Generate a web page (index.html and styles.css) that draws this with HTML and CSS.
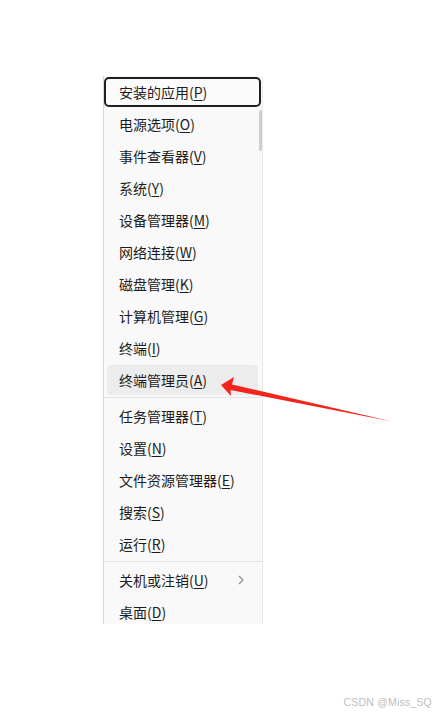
FILE: index.html
```html
<!DOCTYPE html>
<html lang="zh-CN">
<head>
  <meta charset="UTF-8">
  <meta name="viewport" content="width=device-width, initial-scale=1.0">
  <title>Win + X 菜单</title>
  <link rel="stylesheet" href="styles.css">
</head>
<body>
  <div class="page">
    <div class="menu">
      <div class="scroll-thumb"></div>
      <ul class="items">
        <li class="item focused">安装的应用(<u>P</u>)</li>
        <li class="item">电源选项(<u>O</u>)</li>
        <li class="item">事件查看器(<u>V</u>)</li>
        <li class="item">系统(<u>Y</u>)</li>
        <li class="item">设备管理器(<u>M</u>)</li>
        <li class="item">网络连接(<u>W</u>)</li>
        <li class="item">磁盘管理(<u>K</u>)</li>
        <li class="item">计算机管理(<u>G</u>)</li>
        <li class="item">终端(<u>I</u>)</li>
        <li class="item hover">终端管理员(<u>A</u>)</li>
        <li class="sep"></li>
        <li class="item">任务管理器(<u>T</u>)</li>
        <li class="item">设置(<u>N</u>)</li>
        <li class="item">文件资源管理器(<u>E</u>)</li>
        <li class="item">搜索(<u>S</u>)</li>
        <li class="item">运行(<u>R</u>)</li>
        <li class="sep"></li>
        <li class="item has-sub">关机或注销(<u>U</u>)
          <svg class="chev" width="6" height="10" viewBox="0 0 6 10"><polyline points="1,1 5,5 1,9" fill="none" stroke="#8a8a8a" stroke-width="1.1"/></svg>
        </li>
        <li class="item">桌面(<u>D</u>)</li>
      </ul>
    </div>

    <!-- red annotation arrow -->
    <svg class="arrow" width="435" height="724" viewBox="0 0 435 724">
      <polygon points="221,385 234,377 232,384.5 392,421.5 230.5,390 231,396" fill="#f4231c"/>
    </svg>

    <div class="mark">CSDN @Miss_SQ</div>
  </div>
</body>
</html>
```

FILE: styles.css
```css
html, body { margin: 0; padding: 0; background: #fff; }
.page { position: relative; width: 435px; height: 724px; overflow: hidden; }

.menu { position: relative; margin: 76px 0 0 103px; width: 158px; height: 548px; overflow: hidden; background: #f9f9f9; border-left: 1px solid #d6d6d6; border-right: 1px solid #e8e8e8; }
.scroll-thumb { position: absolute; right: 0; top: 34px; width: 3px; height: 41px; background: #cfcfcf; border-radius: 2px; }

.items { list-style: none; margin: 0; padding: 0; display: flex; flex-direction: column; }
.item { position: relative; height: 30px; margin: 1px 4px 1px 3px; padding-left: 12px; display: flex; align-items: center; border-radius: 4px; font-family: "Noto Sans CJK SC", "Noto Sans", sans-serif; font-size: 14px; color: #1c1c1c; white-space: nowrap; }
.item u { text-decoration-thickness: 1px; text-underline-offset: 2px; }
.item.focused { margin: 1px 1px 1px 0; padding-left: 13px; border: 2px solid #1f1f1f; height: 26px; border-radius: 5px; background: #fbfbfb; }
.item.hover { background: #ececec; }
.sep { height: 1px; margin: 1px 0 2px; background: #e3e3e3; }
.chev { position: absolute; left: 131px; top: 10px; }

.arrow { position: absolute; left: 0; top: 0; pointer-events: none; }
.mark { position: absolute; right: 3px; top: 696px; font-family: "Liberation Sans", Arial, sans-serif; font-size: 10.5px; letter-spacing: 0.2px; color: #bdbdbd; }
```
